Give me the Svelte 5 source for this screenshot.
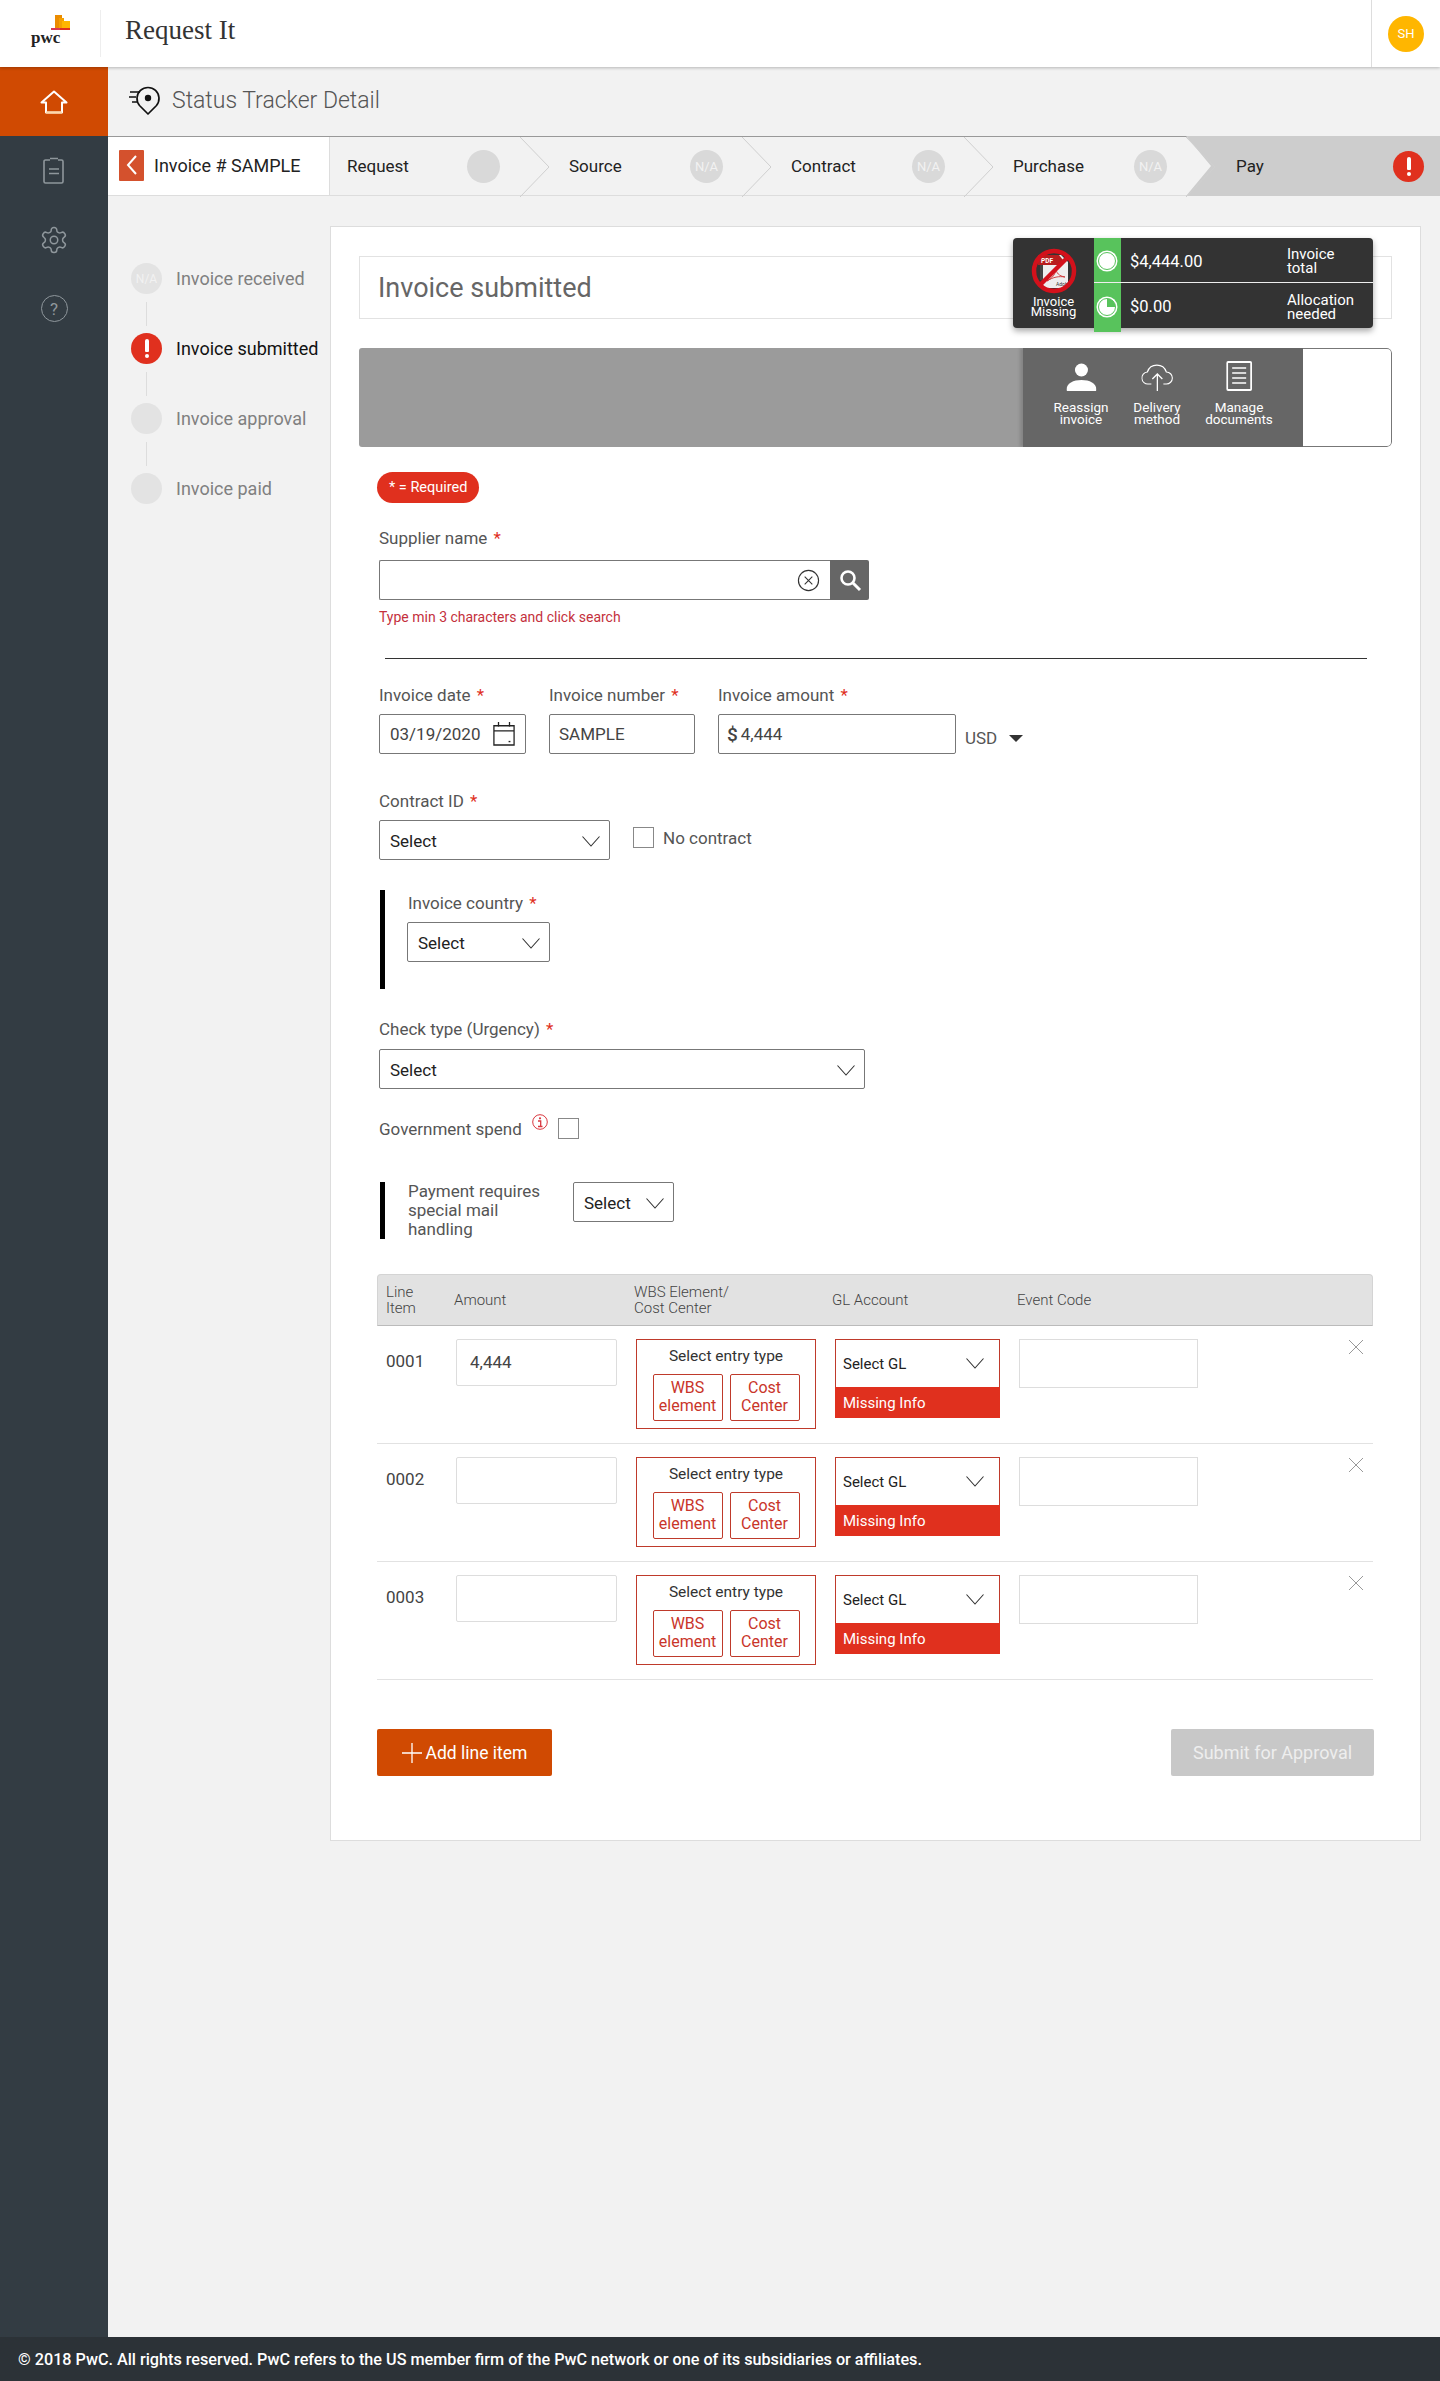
<script>
  const steps = [
    { name: "Request", badge: "", cls: "first" },
    { name: "Source", badge: "N/A", cls: "" },
    { name: "Contract", badge: "N/A", cls: "" },
    { name: "Purchase", badge: "N/A", cls: "" },
  ];

  const statuses = [
    { label: "Invoice received", badge: "N/A" },
    { label: "Invoice submitted", alert: true },
    { label: "Invoice approval", badge: "" },
    { label: "Invoice paid", badge: "" },
  ];

  const lines = [
    { id: "0001", amount: "4,444" },
    { id: "0002", amount: "" },
    { id: "0003", amount: "" },
  ];
</script>

{#snippet chevron()}
  <svg class="chev" viewBox="0 0 18 11" width="18" height="11" aria-hidden="true">
    <polyline points="0.500,0.500 9,10 17.500,0.500" fill="none" stroke="#333" stroke-width="1.100" />
  </svg>
{/snippet}

{#snippet alertIcon()}
  <span class="alert"><span class="alert-bar"></span><span class="alert-dot"></span></span>
{/snippet}

<div class="app">
  <header class="topbar">
    <div class="logo">
      <svg class="logo-mark" viewBox="0 0 20 15" width="20" height="15" aria-hidden="true">
        <rect x="4" y="0" width="7" height="13" fill="#eb8c00" />
        <rect x="8" y="3" width="5" height="10" fill="#f4a000" />
        <rect x="11" y="6" width="8" height="7" fill="#ffb600" />
        <rect x="0" y="13" width="9" height="2" fill="#d93954" />
        <rect x="9" y="13" width="10" height="2" fill="#e0301e" />
      </svg>
      <span class="logo-text">pwc</span>
    </div>
    <div class="app-name">Request It</div>
    <div class="user"><span class="avatar">SH</span></div>
  </header>

  <div class="body">
    <nav class="sidebar">
      <div class="nav-item active">
        <svg viewBox="0 0 28 24" width="28" height="24" aria-hidden="true">
          <path d="M1.500 12.500 14 1.500l12.500 11H22v10H6v-10z" fill="none" stroke="#fff" stroke-width="2" stroke-linejoin="round" />
          <path d="M6 22.500h16" stroke="#ffd9a8" stroke-width="2" />
        </svg>
      </div>
      <div class="nav-item">
        <svg viewBox="0 0 24 28" width="24" height="28" aria-hidden="true">
          <path d="M8 3H3.500a1.500 1.500 0 0 0-1.500 1.500v20A1.500 1.500 0 0 0 3.500 26h16a1.500 1.500 0 0 0 1.500-1.500v-20A1.500 1.500 0 0 0 19.500 3H16" fill="none" stroke="#8f979c" stroke-width="1.600" />
          <path d="M8 1.500h8M7 12h10M7 16.500h10" fill="none" stroke="#8f979c" stroke-width="1.600" />
        </svg>
      </div>
      <div class="nav-item">
        <svg viewBox="0 0 24 24" width="30" height="30" aria-hidden="true">
          <path d="M12.220 2h-.44a2 2 0 0 0-2 2v.18a2 2 0 0 1-1 1.730l-.43.25a2 2 0 0 1-2 0l-.15-.08a2 2 0 0 0-2.730.73l-.22.38a2 2 0 0 0 .73 2.730l.15.1a2 2 0 0 1 1 1.720v.51a2 2 0 0 1-1 1.740l-.15.09a2 2 0 0 0-.73 2.730l.22.38a2 2 0 0 0 2.730.73l.15-.08a2 2 0 0 1 2 0l.43.25a2 2 0 0 1 1 1.730V20a2 2 0 0 0 2 2h.44a2 2 0 0 0 2-2v-.18a2 2 0 0 1 1-1.730l.43-.25a2 2 0 0 1 2 0l.15.08a2 2 0 0 0 2.730-.73l.22-.39a2 2 0 0 0-.73-2.730l-.15-.08a2 2 0 0 1-1-1.740v-.5a2 2 0 0 1 1-1.740l.15-.09a2 2 0 0 0 .73-2.730l-.22-.38a2 2 0 0 0-2.730-.73l-.15.08a2 2 0 0 1-2 0l-.43-.25a2 2 0 0 1-1-1.730V4a2 2 0 0 0-2-2z" fill="none" stroke="#8f979c" stroke-width="1.200" />
          <circle cx="12" cy="12" r="3" fill="none" stroke="#8f979c" stroke-width="1.200" />
        </svg>
      </div>
      <div class="nav-item"><span class="help">?</span></div>
    </nav>

    <main class="main">
      <div class="subheader">
        <svg viewBox="0 0 32 30" width="32" height="30" aria-hidden="true">
          <path d="M19 28 10.500 19.500A11 11 0 1 1 27.500 19.500z" fill="none" stroke="#111" stroke-width="1.700" stroke-linejoin="round" />
          <circle cx="19" cy="12" r="3.200" fill="#111" />
          <path d="M1 6h10M0 11h7M3 16h6" stroke="#111" stroke-width="1.500" />
        </svg>
        <h1>Status Tracker Detail</h1>
      </div>

      <div class="stepper">
        <div class="invoice-cell">
          <span class="back">
            <svg viewBox="0 0 12 20" width="12" height="20" aria-hidden="true">
              <polyline points="10,1 2,10 10,19" fill="none" stroke="#fff" stroke-width="2" />
            </svg>
          </span>
          <span>Invoice # SAMPLE</span>
        </div>
        {#each steps as step}
          <div class="step {step.cls}">
            <span class="step-name">{step.name}</span>
            <span class="step-badge">{step.badge}</span>
            <svg class="step-arrow" viewBox="0 0 30 60" width="30" height="60" aria-hidden="true">
              <polyline points="0,0 29,30 0,60" fill="none" stroke="#cfcfcf" stroke-width="1" />
            </svg>
          </div>
        {/each}
        <div class="step pay">
          <span class="step-name">Pay</span>
          {@render alertIcon()}
        </div>
      </div>

      <div class="content">
        <aside class="status-list">
          {#each statuses as s, i}
            {#if i > 0}<div class="connector"></div>{/if}
            <div class="status" class:current={s.alert}>
              {#if s.alert}
                {@render alertIcon()}
              {:else}
                <span class="status-badge">{s.badge}</span>
              {/if}
              <span>{s.label}</span>
            </div>
          {/each}
        </aside>

        <section class="card">
          <div class="title-box"><span>Invoice submitted</span></div>

          <div class="summary">
            <div class="summary-missing">
              <svg viewBox="0 0 46 46" width="46" height="46" aria-hidden="true">
                <path d="M12 7h18l7 7v26H12z" fill="#eee" />
                <path d="M7 7h21l4 5-4 5H7z" fill="#b81d1d" />
                <path d="M12 17h-3v15h3z" fill="#444" />
                <text x="10" y="14.500" class="pdf-tag">PDF</text>
                <text x="25" y="38" class="adobe-tag">Adobe</text>
                <path d="M16 33c6-3 9-8 9-13 0 5 3 8 9 9-6-1-12 0-18 4z" fill="none" stroke="#c33" stroke-width="0.900" />
                <circle cx="23" cy="23" r="20" fill="none" stroke="#d3111b" stroke-width="4.500" />
                <path d="M37 9 9 37" stroke="#d3111b" stroke-width="4.500" />
              </svg>
              <div class="missing-text">Invoice<br />Missing</div>
            </div>
            <div class="summary-rows">
              <div class="summary-row">
                <svg class="ring" viewBox="0 0 22 22" width="22" height="22" aria-hidden="true">
                  <circle cx="11" cy="11" r="10.500" fill="#fff" />
                  <circle cx="11" cy="11" r="8.500" fill="#fff" stroke="#58c35c" stroke-width="1" />
                </svg>
                <span class="amount">$4,444.00</span>
                <span class="amount-label">Invoice<br />total</span>
              </div>
              <div class="summary-row second">
                <svg class="ring" viewBox="0 0 22 22" width="22" height="22" aria-hidden="true">
                  <circle cx="11" cy="11" r="10.500" fill="#fff" />
                  <circle cx="11" cy="11" r="8.500" fill="#fff" stroke="#58c35c" stroke-width="1" />
                  <path d="M11 11V2.500A8.500 8.500 0 0 1 19.500 11z" fill="#58c35c" />
                </svg>
                <span class="amount">$0.00</span>
                <span class="amount-label">Allocation<br />needed</span>
              </div>
            </div>
          </div>

          <div class="actions">
            <div class="actions-fill"></div>
            <div class="actions-dark">
              <div class="action a1">
                <svg viewBox="0 0 30 28" width="30" height="28" aria-hidden="true">
                  <circle cx="15" cy="7" r="6.500" fill="#fff" />
                  <path d="M0 27c0-7 7-10 15-10s15 3 15 10c0 .5-.5 1-1 1H1c-.5 0-1-.5-1-1z" fill="#fff" />
                </svg>
                <span>Reassign<br />invoice</span>
              </div>
              <div class="action a2">
                <svg viewBox="0 0 32 28" width="32" height="28" aria-hidden="true">
                  <path d="M10 21H7a6 6 0 0 1-1-12 10 10 0 0 1 19 0 6 6 0 0 1 0 12h-3" fill="none" stroke="#fff" stroke-width="1.100" />
                  <path d="M16 28V11M11 16l5-5 5 5" fill="none" stroke="#fff" stroke-width="1.300" />
                </svg>
                <span>Delivery<br />method</span>
              </div>
              <div class="action a3">
                <svg viewBox="0 0 26 30" width="26" height="30" aria-hidden="true">
                  <rect x="1" y="1" width="24" height="28" rx="1" fill="none" stroke="#fff" stroke-width="1.800" />
                  <path d="M6 7h14M6 12h14M6 17h14M6 22h14" stroke="#fff" stroke-width="1.600" />
                </svg>
                <span>Manage<br />documents</span>
              </div>
            </div>
            <div class="actions-end"></div>
          </div>

          <div class="form">
            <span class="required-pill">* = Required</span>

            <div class="label supplier-label">Supplier name <i>*</i></div>
            <div class="search">
              <div class="search-input">
                <input type="text" aria-label="Supplier name" />
                <svg viewBox="0 0 24 24" width="23" height="23" aria-hidden="true">
                  <circle cx="12" cy="12" r="10.500" fill="none" stroke="#333" stroke-width="1.200" />
                  <path d="M8 8l8 8M16 8l-8 8" stroke="#333" stroke-width="1.100" />
                </svg>
              </div>
              <button class="search-btn" aria-label="Search">
                <svg viewBox="0 0 24 24" width="24" height="24" aria-hidden="true">
                  <circle cx="10" cy="10" r="6.500" fill="none" stroke="#fff" stroke-width="2.600" />
                  <path d="m15 15 7 7" stroke="#fff" stroke-width="3" />
                </svg>
              </button>
            </div>
            <div class="hint">Type min 3 characters and click search</div>
            <div class="divider"></div>

            <div class="invoice-row">
              <div>
                <div class="label">Invoice date <i>*</i></div>
                <div class="box date">
                  <span>03/19/2020</span>
                  <svg viewBox="0 0 24 26" width="22" height="24" aria-hidden="true">
                    <path d="M1 4h22v21H1zM1 9.500h22M6 0v5M18 0v5" fill="none" stroke="#222" stroke-width="1.400" />
                    <rect x="17" y="20.500" width="2" height="1.500" fill="#222" />
                  </svg>
                </div>
              </div>
              <div>
                <div class="label">Invoice number <i>*</i></div>
                <div class="box number">SAMPLE</div>
              </div>
              <div>
                <div class="label">Invoice amount <i>*</i></div>
                <div class="box amount-box"><b>$</b>4,444</div>
              </div>
              <div class="currency">USD <span class="caret"></span></div>
            </div>

            <div class="label contract-label">Contract ID <i>*</i></div>
            <div class="contract-row">
              <div class="select contract">Select {@render chevron()}</div>
              <label class="check-label"><span class="checkbox"></span>No contract</label>
            </div>

            <div class="flagged country">
              <div class="label">Invoice country <i>*</i></div>
              <div class="select country-select">Select {@render chevron()}</div>
            </div>

            <div class="label check-type-label">Check type (Urgency) <i>*</i></div>
            <div class="select check-type">Select {@render chevron()}</div>

            <div class="gov-row">
              <span class="gov-text">Government spend</span>
              <svg class="info" viewBox="0 0 16 16" width="16" height="16" aria-hidden="true">
                <circle cx="8" cy="8" r="7.300" fill="none" stroke="#d9363e" stroke-width="1" />
                <circle cx="8" cy="4.300" r="1.100" fill="#d9363e" />
                <path d="M6 7h2.700v5M6 12.500h4.500" fill="none" stroke="#d9363e" stroke-width="1.300" />
              </svg>
              <span class="checkbox"></span>
            </div>

            <div class="flagged mail">
              <div class="mail-text">Payment requires<br />special mail<br />handling</div>
              <div class="select mail-select">Select {@render chevron()}</div>
            </div>

            <div class="table">
              <div class="table-head">
                <span>Line<br />Item</span>
                <span>Amount</span>
                <span>WBS Element/<br />Cost Center</span>
                <span>GL Account</span>
                <span>Event Code</span>
              </div>
              {#each lines as line}
                <div class="table-row">
                  <span class="line-id">{line.id}</span>
                  <input class="cell-input" value={line.amount} aria-label="Amount" />
                  <div class="entry">
                    <div class="entry-title">Select entry type</div>
                    <div class="entry-buttons">
                      <span class="entry-btn">WBS<br />element</span>
                      <span class="entry-btn">Cost<br />Center</span>
                    </div>
                  </div>
                  <div class="gl">
                    <div class="gl-select">Select GL {@render chevron()}</div>
                    <div class="gl-missing">Missing Info</div>
                  </div>
                  <input class="cell-input event" aria-label="Event code" />
                  <svg class="remove" viewBox="0 0 16 16" width="16" height="16" aria-hidden="true">
                    <path d="M1 1l14 14M15 1 1 15" stroke="#999" stroke-width="1" />
                  </svg>
                </div>
              {/each}
            </div>

            <div class="form-buttons">
              <button class="btn add">
                <svg viewBox="0 0 20 20" width="20" height="20" aria-hidden="true">
                  <path d="M10 0v20M0 10h20" stroke="#fff" stroke-width="1.300" />
                </svg>
                Add line item
              </button>
              <button class="btn submit">Submit for Approval</button>
            </div>
          </div>
        </section>
      </div>
    </main>
  </div>

  <footer class="footer">© 2018 PwC. All rights reserved. PwC refers to the US member firm of the PwC network or one of its subsidiaries or affiliates.</footer>
</div>

<style>
  :global(body) {
    margin: 0;
    font-family: Roboto, "Liberation Sans", sans-serif;
    color: #333;
  }

  .app {
    display: flex;
    flex-direction: column;
    min-height: 2381px;
    background: #f2f2f2;
  }

  /* top bar */
  .topbar {
    position: relative;
    z-index: 2;
    display: flex;
    align-items: center;
    height: 67px;
    background: #fff;
    box-shadow: 0 1px 3px rgba(0, 0, 0, 0.25);
  }

  .logo {
    position: relative;
    width: 101px;
    height: 47px;
    box-sizing: border-box;
    border-right: 1px solid #eee;
  }

  .logo-mark {
    position: absolute;
    left: 51px;
    top: 5px;
  }

  .logo-text {
    position: absolute;
    left: 31px;
    top: 18px;
    font-family: "Liberation Serif", serif;
    font-weight: 700;
    font-size: 17px;
    color: #222;
    line-height: 20px;
  }

  .app-name {
    flex: 1;
    margin-left: 24px;
    margin-top: -6px;
    font-family: "Liberation Serif", serif;
    font-size: 27px;
    color: #333;
  }

  .user {
    display: flex;
    align-items: center;
    justify-content: flex-end;
    box-sizing: border-box;
    width: 69px;
    height: 67px;
    padding-right: 16px;
    border-left: 1px solid #ddd;
  }

  .avatar {
    display: flex;
    align-items: center;
    justify-content: center;
    width: 36px;
    height: 36px;
    border-radius: 50%;
    background: #ffb600;
    color: #fff;
    font-size: 13px;
  }

  /* sidebar */
  .body {
    flex: 1;
    display: flex;
  }

  .sidebar {
    flex: 0 0 108px;
    background: #333c43;
  }

  .nav-item {
    display: flex;
    align-items: center;
    justify-content: center;
    height: 69px;
  }

  .nav-item.active {
    background: #d04a02;
  }

  .help {
    display: flex;
    align-items: center;
    justify-content: center;
    box-sizing: border-box;
    width: 27px;
    height: 27px;
    border: 1.500px solid #8f979c;
    border-radius: 50%;
    color: #8f979c;
    font-size: 17px;
  }

  /* main */
  .main {
    flex: 1;
    min-width: 0;
  }

  .subheader {
    display: flex;
    align-items: center;
    gap: 11px;
    height: 69px;
    box-sizing: border-box;
    padding-left: 21px;
    padding-bottom: 2px;
  }

  .subheader h1 {
    margin: 0;
    font-size: 23px;
    font-weight: 300;
    color: #555;
  }

  .stepper {
    display: flex;
    height: 60px;
    box-sizing: border-box;
    border-top: 1px solid #999;
    border-bottom: 1px solid #ddd;
    font-size: 17px;
    color: #222;
  }

  .invoice-cell {
    display: flex;
    align-items: center;
    gap: 10px;
    flex: 0 0 222px;
    box-sizing: border-box;
    padding: 0 0 2px 11px;
    background: #fff;
    border-right: 1px solid #ddd;
    font-size: 18px;
  }

  .back {
    display: flex;
    align-items: center;
    justify-content: center;
    width: 25px;
    height: 31px;
    background: #d4512d;
    border-radius: 1px;
  }

  .step {
    position: relative;
    display: flex;
    align-items: center;
    box-sizing: border-box;
    flex: 0 0 222px;
    padding-left: 49px;
  }

  .step.first {
    flex-basis: 190px;
    padding-left: 17px;
  }

  .step-badge {
    position: absolute;
    left: 170px;
    top: 13px;
    display: flex;
    align-items: center;
    justify-content: center;
    width: 33px;
    height: 33px;
    border-radius: 50%;
    background: #d9d9d9;
    color: #f2f2f2;
    font-size: 13px;
  }

  .step.first .step-badge {
    left: 137px;
  }

  .step-arrow {
    position: absolute;
    left: 100%;
    top: 0;
    z-index: 1;
  }

  .step.pay {
    flex: 1;
    margin-top: -1px;
    margin-bottom: -1px;
    padding-left: 50px;
    background: #cdcdcd;
    clip-path: polygon(0 0, 100% 0, 100% 100%, 0 100%, 25px 50%);
    justify-content: space-between;
    padding-right: 16px;
  }

  .alert {
    position: relative;
    display: block;
    flex: none;
    width: 31px;
    height: 31px;
    border-radius: 50%;
    background: #e0301e;
  }

  .alert-bar {
    position: absolute;
    left: 13.500px;
    top: 6px;
    width: 4px;
    height: 13px;
    background: #fff;
    border-radius: 2px 2px 1px 1px;
  }

  .alert-dot {
    position: absolute;
    left: 13.500px;
    top: 21px;
    width: 4px;
    height: 4px;
    background: #fff;
    border-radius: 50%;
  }

  .content {
    display: flex;
    align-items: flex-start;
  }

  /* left status column */
  .status-list {
    flex: 0 0 222px;
    box-sizing: border-box;
    padding: 67px 0 0 23px;
  }

  .status {
    display: flex;
    align-items: center;
    gap: 14px;
    height: 31px;
    font-size: 18px;
    color: #808080;
    white-space: nowrap;
  }

  .status.current {
    color: #111;
  }

  .status-badge {
    display: flex;
    align-items: center;
    justify-content: center;
    flex: none;
    width: 31px;
    height: 31px;
    border-radius: 50%;
    background: #e3e3e3;
    color: #f2f2f2;
    font-size: 12px;
  }

  .connector {
    width: 1px;
    height: 24px;
    margin: 8px 0 7px 15px;
    background: #ddd;
  }

  /* card */
  .card {
    position: relative;
    flex: 1;
    margin: 30px 19px 0 0;
    padding: 29px 28px 64px;
    background: #fff;
    border: 1px solid #ddd;
  }

  .title-box {
    display: flex;
    align-items: center;
    box-sizing: border-box;
    height: 63px;
    padding-left: 18px;
    border: 1px solid #e2e2e2;
    font-size: 27px;
    color: #666;
  }

  .summary {
    position: absolute;
    left: 682px;
    top: 11px;
    display: flex;
    width: 360px;
    height: 90px;
    border-radius: 4px;
    background: #333;
    color: #fff;
    box-shadow: 0 3px 6px rgba(0, 0, 0, 0.35);
  }

  .summary-missing {
    flex: 0 0 81px;
    padding-top: 10px;
    text-align: center;
  }

  .summary-missing svg {
    display: block;
    margin: 0 auto;
  }

  .pdf-tag {
    font-family: Roboto, sans-serif;
    font-size: 6.500px;
    font-weight: 700;
    fill: #fff;
  }

  .adobe-tag {
    font-family: Roboto, sans-serif;
    font-size: 5px;
    fill: #333;
  }

  .missing-text {
    margin-top: 3px;
    font-size: 13px;
    line-height: 10px;
  }

  .summary-rows {
    flex: 1;
    position: relative;
  }

  /* green strip runs a little past the panel's bottom edge */
  .summary-rows::before {
    content: "";
    position: absolute;
    left: 0;
    top: 0;
    bottom: -4px;
    width: 27px;
    background: #58c35c;
  }

  .summary-row {
    position: relative;
    display: flex;
    align-items: center;
    box-sizing: border-box;
    height: 44px;
    padding-top: 2px;
  }

  .summary-row.second {
    height: 46px;
    border-top: 1px solid #eee;
  }

  .ring {
    flex: none;
    margin-left: 2px;
  }

  .amount {
    flex: 0 0 157px;
    margin-left: 12px;
    font-size: 16.500px;
  }

  .amount-label {
    font-size: 15px;
    line-height: 14px;
  }

  .actions {
    display: flex;
    height: 99px;
    margin-top: 29px;
    border-radius: 3px 5px 5px 3px;
    overflow: hidden;
  }

  .actions-fill {
    flex: 0 0 664px;
    background: #9b9b9b;
  }

  .actions-dark {
    position: relative;
    flex: 0 0 280px;
    background: #666;
    color: #fff;
    box-shadow: -3px 0 3px rgba(0, 0, 0, 0.15);
  }

  .actions-end {
    flex: 1;
    border: 1px solid #777;
    border-left: 0;
    border-radius: 0 5px 5px 0;
  }

  .action {
    position: absolute;
    top: 15px;
    transform: translateX(-50%);
    display: flex;
    flex-direction: column;
    align-items: center;
    gap: 10px;
    font-size: 13.500px;
    line-height: 12px;
    text-align: center;
    white-space: nowrap;
  }

  .action.a1 {
    left: 58px;
  }

  .action.a2 {
    left: 134px;
  }

  .action.a3 {
    left: 216px;
    top: 13px;
  }

  .action svg {
    display: block;
  }

  /* form */
  .form {
    padding-left: 20px;
  }

  .required-pill {
    display: inline-flex;
    align-items: center;
    box-sizing: border-box;
    height: 31px;
    margin: 25px 0 0 -2px;
    padding: 0 12px;
    border-radius: 16px;
    background: #e0301e;
    color: #fff;
    font-size: 14.500px;
  }

  .label {
    height: 20px;
    margin-bottom: 9px;
    font-size: 17px;
    line-height: 20px;
    color: #555;
    white-space: nowrap;
  }

  .label i {
    font-style: normal;
    color: #e0301e;
    margin-left: 2px;
  }

  .supplier-label {
    margin-top: 25px;
    margin-bottom: 12px;
  }

  .search {
    display: flex;
    width: 490px;
    height: 40px;
  }

  .search-input {
    flex: 1;
    display: flex;
    align-items: center;
    padding-right: 10px;
    border: 1px solid #777;
    border-right: 0;
    border-radius: 2px 0 0 2px;
  }

  .search-input input {
    flex: 1;
    min-width: 0;
    border: 0;
    outline: 0;
  }

  .search-btn {
    display: flex;
    align-items: center;
    justify-content: center;
    flex: 0 0 39px;
    padding: 0;
    border: 0;
    border-radius: 0 2px 2px 0;
    background: #666;
  }

  .hint {
    margin-top: 9px;
    font-size: 14px;
    line-height: 16px;
    color: #c4303c;
  }

  .divider {
    width: 982px;
    height: 1px;
    margin: 33px 0 0 6px;
    background: #333;
  }

  .invoice-row {
    display: flex;
    align-items: flex-end;
    margin-top: 26px;
  }

  .box {
    display: flex;
    align-items: center;
    box-sizing: border-box;
    height: 40px;
    border: 1px solid #777;
    border-radius: 2px;
    font-size: 17px;
    color: #444;
  }

  .date {
    justify-content: space-between;
    width: 147px;
    margin-right: 23px;
    padding: 0 10px;
  }

  .number {
    width: 146px;
    margin-right: 23px;
    padding-left: 9px;
  }

  .amount-box {
    width: 238px;
    padding-left: 8px;
  }

  .amount-box b {
    margin-right: 3px;
    font-size: 19px;
    font-weight: 500;
  }

  .currency {
    display: flex;
    align-items: center;
    gap: 12px;
    margin-left: 9px;
    padding-bottom: 6px;
    font-size: 17px;
    color: #555;
  }

  .caret {
    width: 0;
    height: 0;
    border-left: 7px solid transparent;
    border-right: 7px solid transparent;
    border-top: 7px solid #333;
  }

  .select {
    display: flex;
    align-items: center;
    justify-content: space-between;
    box-sizing: border-box;
    height: 40px;
    padding: 2px 9px 0 10px;
    border: 1px solid #777;
    border-radius: 2px;
    font-size: 17px;
    color: #222;
  }

  .contract-label {
    margin-top: 37px;
  }

  .contract-row {
    display: flex;
    align-items: flex-start;
    gap: 23px;
  }

  .contract {
    width: 231px;
  }

  .check-label {
    display: flex;
    align-items: center;
    gap: 9px;
    margin-top: 7px;
    font-size: 17px;
    color: #555;
  }

  .checkbox {
    display: block;
    flex: none;
    box-sizing: border-box;
    width: 21px;
    height: 21px;
    border: 1px solid #888;
  }

  .flagged {
    margin-left: 1px;
    padding-left: 23px;
    border-left: 5px solid #000;
  }

  .country {
    margin-top: 30px;
    padding-top: 3px;
    padding-bottom: 27px;
  }

  .country-select {
    width: 143px;
    margin-left: -1px;
  }

  .check-type-label {
    margin-top: 30px;
    margin-bottom: 10px;
  }

  .check-type {
    width: 486px;
  }

  .gov-row {
    display: flex;
    align-items: center;
    height: 21px;
    margin-top: 29px;
    font-size: 17px;
    color: #555;
  }

  .gov-text {
    flex: 0 0 145px;
    white-space: nowrap;
  }

  .info {
    margin: -13px 0 0 8px;
  }

  .gov-row .checkbox {
    margin-left: 10px;
  }

  .mail {
    display: flex;
    align-items: flex-start;
    height: 57px;
    margin-top: 43px;
    font-size: 17px;
    line-height: 19px;
    color: #555;
  }

  .mail-text {
    flex: 0 0 165px;
    white-space: nowrap;
  }

  .mail-select {
    width: 101px;
  }

  /* line items */
  .table {
    width: 996px;
    margin: 35px 0 0 -2px;
  }

  .table-head {
    display: grid;
    grid-template-columns: 49px 161px 179px 166px 1fr;
    column-gap: 19px;
    align-items: center;
    box-sizing: border-box;
    height: 52px;
    padding-left: 8px;
    background: #e2e2e2;
    border: 1px solid #d4d4d4;
    border-bottom-color: #bbb;
    border-radius: 4px 4px 0 0;
    font-size: 15px;
    font-weight: 300;
    line-height: 16px;
    color: #444;
  }

  .table-row {
    display: grid;
    grid-template-columns: 51px 161px 180px 165px 179px 1fr;
    column-gap: 19px;
    align-items: start;
    box-sizing: border-box;
    height: 118px;
    padding: 13px 9px 0;
    border-bottom: 1px solid #e2e2e2;
  }

  .line-id {
    margin-top: 12px;
    font-size: 17px;
    line-height: 20px;
    color: #444;
  }

  .cell-input {
    box-sizing: border-box;
    width: 100%;
    height: 47px;
    padding: 0 0 2px 13px;
    border: 1px solid #ddd;
    border-radius: 2px;
    outline: 0;
    font-family: inherit;
    font-size: 17px;
    color: #444;
  }

  .cell-input.event {
    height: 49px;
    border-radius: 0;
  }

  .entry {
    box-sizing: border-box;
    height: 90px;
    padding: 6px 0 0;
    border: 1px solid #bf3a2b;
    text-align: center;
  }

  .entry-title {
    font-size: 15.500px;
    line-height: 20px;
    color: #333;
  }

  .entry-buttons {
    display: flex;
    justify-content: center;
    gap: 7px;
    margin-top: 8px;
  }

  .entry-btn {
    box-sizing: border-box;
    width: 70px;
    height: 47px;
    padding-top: 4px;
    border: 1px solid #bf3a2b;
    border-radius: 2px;
    font-size: 16px;
    line-height: 18px;
    color: #c9352a;
  }

  .gl {
    box-sizing: border-box;
    height: 79px;
    border: 1px solid #bf3a2b;
    border-bottom: 0;
  }

  .gl-select {
    display: flex;
    align-items: center;
    justify-content: space-between;
    height: 47px;
    padding: 0 15px 0 7px;
    font-size: 15px;
    color: #222;
  }

  .gl-missing {
    display: flex;
    align-items: center;
    height: 31px;
    margin: 0 -1px;
    padding-left: 8px;
    background: #e0301e;
    font-size: 15px;
    color: #fff;
  }

  .remove {
    justify-self: end;
  }

  .form-buttons {
    display: flex;
    justify-content: space-between;
    width: 997px;
    margin: 49px 0 0 -2px;
  }

  .btn {
    display: flex;
    align-items: center;
    justify-content: center;
    gap: 4px;
    height: 47px;
    border: 0;
    border-radius: 2px;
    font-family: inherit;
    font-size: 17.500px;
    color: #fff;
  }

  .btn.add {
    width: 175px;
    background: #d04a02;
  }

  .btn.submit {
    width: 203px;
    background: #c8c8c8;
    color: #eee;
    font-size: 18px;
  }

  .footer {
    display: flex;
    align-items: center;
    box-sizing: border-box;
    height: 44px;
    padding-left: 18px;
    background: #2c3237;
    color: #fff;
    font-size: 16.200px;
    font-weight: 500;
  }
</style>
